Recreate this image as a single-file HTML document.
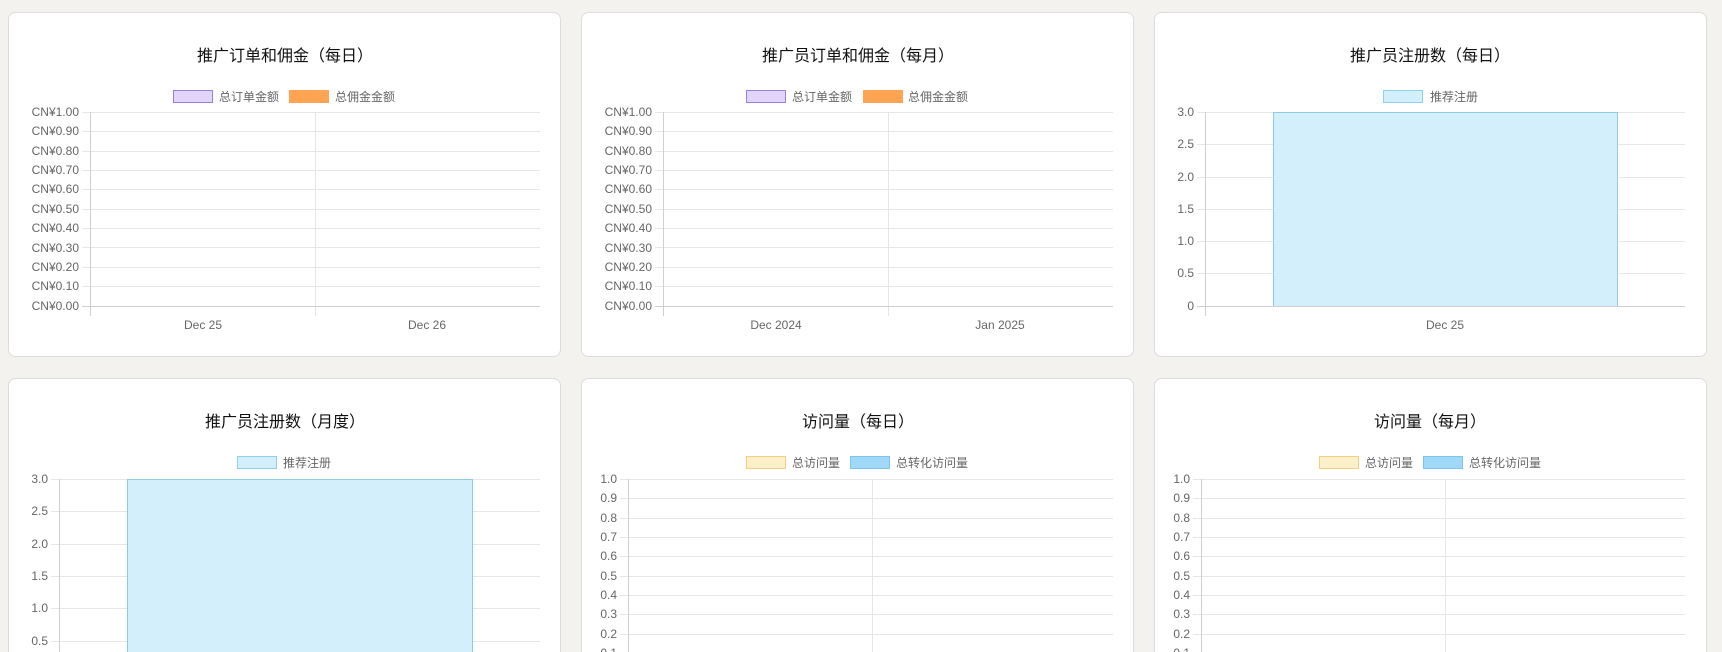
<!DOCTYPE html>
<html><head><meta charset="utf-8"><style>
html,body{margin:0;padding:0;background:#f3f2ee;width:1722px;height:652px;overflow:hidden}
svg{display:block}
text{font-family:"Liberation Sans","Noto Sans CJK SC",sans-serif}
.t{font-size:16px;fill:#111;text-anchor:middle}
.l{font-size:12px;fill:#666}
.y{font-size:12px;fill:#666;text-anchor:end}
.x{font-size:12px;fill:#666;text-anchor:middle}
.g{stroke:#e6e6e6;stroke-width:1}
.a{stroke:#cfcfcf;stroke-width:1}
.card{fill:#fff;stroke:#dcdcdc;stroke-width:1}
</style></head><body>
<svg width="1722" height="652" viewBox="0 0 1722 652">
<!-- cards -->
<rect class="card" x="8.5" y="12.5" width="552" height="344" rx="7"/>
<rect class="card" x="581.5" y="12.5" width="552" height="344" rx="7"/>
<rect class="card" x="1154.5" y="12.5" width="552" height="344" rx="7"/>
<rect class="card" x="8.5" y="378.5" width="552" height="344" rx="7"/>
<rect class="card" x="581.5" y="378.5" width="552" height="344" rx="7"/>
<rect class="card" x="1154.5" y="378.5" width="552" height="344" rx="7"/>

<!-- ===== Card 1 ===== -->
<text class="t" x="285" y="61">推广订单和佣金（每日）</text>
<rect x="173.5" y="90.5" width="39" height="12" fill="#e1d5fb" stroke="#9b7ee0"/>
<text class="l" x="219" y="101">总订单金额</text>
<rect x="289" y="90" width="40" height="13" fill="#ffa452"/>
<text class="l" x="335" y="101">总佣金金额</text>
<g>
<line class="g" x1="82" x2="540" y1="112.5" y2="112.5"/><line class="g" x1="82" x2="540" y1="131.5" y2="131.5"/><line class="g" x1="82" x2="540" y1="151.5" y2="151.5"/><line class="g" x1="82" x2="540" y1="170.5" y2="170.5"/><line class="g" x1="82" x2="540" y1="189.5" y2="189.5"/><line class="g" x1="82" x2="540" y1="209.5" y2="209.5"/><line class="g" x1="82" x2="540" y1="228.5" y2="228.5"/><line class="g" x1="82" x2="540" y1="247.5" y2="247.5"/><line class="g" x1="82" x2="540" y1="267.5" y2="267.5"/><line class="g" x1="82" x2="540" y1="286.5" y2="286.5"/>
<line class="g" x1="315.5" x2="315.5" y1="112" y2="316"/>
<line class="a" x1="82" x2="540" y1="306.5" y2="306.5"/>
<line class="a" x1="90.5" x2="90.5" y1="112" y2="316"/>
<text class="y" x="79" y="116">CN¥1.00</text><text class="y" x="79" y="135">CN¥0.90</text><text class="y" x="79" y="155">CN¥0.80</text><text class="y" x="79" y="174">CN¥0.70</text><text class="y" x="79" y="193">CN¥0.60</text><text class="y" x="79" y="213">CN¥0.50</text><text class="y" x="79" y="232">CN¥0.40</text><text class="y" x="79" y="252">CN¥0.30</text><text class="y" x="79" y="271">CN¥0.20</text><text class="y" x="79" y="290">CN¥0.10</text><text class="y" x="79" y="310">CN¥0.00</text>
<text class="x" x="203" y="329">Dec 25</text><text class="x" x="427" y="329">Dec 26</text>
</g>

<!-- ===== Card 2 ===== -->
<text class="t" x="858" y="61">推广员订单和佣金（每月）</text>
<rect x="746.5" y="90.5" width="39" height="12" fill="#e1d5fb" stroke="#9b7ee0"/>
<text class="l" x="792" y="101">总订单金额</text>
<rect x="863" y="90" width="40" height="13" fill="#ffa452"/>
<text class="l" x="908" y="101">总佣金金额</text>
<g>
<line class="g" x1="655" x2="1113" y1="112.5" y2="112.5"/><line class="g" x1="655" x2="1113" y1="131.5" y2="131.5"/><line class="g" x1="655" x2="1113" y1="151.5" y2="151.5"/><line class="g" x1="655" x2="1113" y1="170.5" y2="170.5"/><line class="g" x1="655" x2="1113" y1="189.5" y2="189.5"/><line class="g" x1="655" x2="1113" y1="209.5" y2="209.5"/><line class="g" x1="655" x2="1113" y1="228.5" y2="228.5"/><line class="g" x1="655" x2="1113" y1="247.5" y2="247.5"/><line class="g" x1="655" x2="1113" y1="267.5" y2="267.5"/><line class="g" x1="655" x2="1113" y1="286.5" y2="286.5"/>
<line class="g" x1="888.5" x2="888.5" y1="112" y2="316"/>
<line class="a" x1="655" x2="1113" y1="306.5" y2="306.5"/>
<line class="a" x1="663.5" x2="663.5" y1="112" y2="316"/>
<text class="y" x="652" y="116">CN¥1.00</text><text class="y" x="652" y="135">CN¥0.90</text><text class="y" x="652" y="155">CN¥0.80</text><text class="y" x="652" y="174">CN¥0.70</text><text class="y" x="652" y="193">CN¥0.60</text><text class="y" x="652" y="213">CN¥0.50</text><text class="y" x="652" y="232">CN¥0.40</text><text class="y" x="652" y="252">CN¥0.30</text><text class="y" x="652" y="271">CN¥0.20</text><text class="y" x="652" y="290">CN¥0.10</text><text class="y" x="652" y="310">CN¥0.00</text>
<text class="x" x="776" y="329">Dec 2024</text><text class="x" x="1000" y="329">Jan 2025</text>
</g>

<!-- ===== Card 3 ===== -->
<text class="t" x="1430" y="61">推广员注册数（每日）</text>
<rect x="1383.5" y="90.5" width="39" height="12" fill="#d3eefc" stroke="#8fd0ec"/>
<text class="l" x="1430" y="101">推荐注册</text>
<g>
<line class="g" x1="1197" x2="1685" y1="112.5" y2="112.5"/><line class="g" x1="1197" x2="1685" y1="144.5" y2="144.5"/><line class="g" x1="1197" x2="1685" y1="177.5" y2="177.5"/><line class="g" x1="1197" x2="1685" y1="209.5" y2="209.5"/><line class="g" x1="1197" x2="1685" y1="241.5" y2="241.5"/><line class="g" x1="1197" x2="1685" y1="273.5" y2="273.5"/>
<rect x="1273.5" y="112.5" width="344" height="194" fill="#d2eefc" fill-opacity="0.95" stroke="#8fcbe3"/>
<line class="a" x1="1197" x2="1685" y1="306.5" y2="306.5"/>
<line class="a" x1="1205.5" x2="1205.5" y1="112" y2="316"/>
<text class="y" x="1194" y="116">3.0</text><text class="y" x="1194" y="148">2.5</text><text class="y" x="1194" y="181">2.0</text><text class="y" x="1194" y="213">1.5</text><text class="y" x="1194" y="245">1.0</text><text class="y" x="1194" y="277">0.5</text><text class="y" x="1194" y="310">0</text>
<text class="x" x="1445" y="329">Dec 25</text>
</g>

<!-- ===== Card 4 ===== -->
<text class="t" x="285" y="427">推广员注册数（月度）</text>
<rect x="237.5" y="456.5" width="39" height="12" fill="#d3eefc" stroke="#8fd0ec"/>
<text class="l" x="283" y="467">推荐注册</text>
<g>
<line class="g" x1="51" x2="540" y1="479.5" y2="479.5"/><line class="g" x1="51" x2="540" y1="511.5" y2="511.5"/><line class="g" x1="51" x2="540" y1="544.5" y2="544.5"/><line class="g" x1="51" x2="540" y1="576.5" y2="576.5"/><line class="g" x1="51" x2="540" y1="608.5" y2="608.5"/><line class="g" x1="51" x2="540" y1="641.5" y2="641.5"/>
<rect x="127.5" y="479.5" width="345" height="200" fill="#d2eefc" fill-opacity="0.95" stroke="#8fcbe3"/>
<line class="a" x1="59.5" x2="59.5" y1="479" y2="652"/>
<text class="y" x="48" y="483">3.0</text><text class="y" x="48" y="515">2.5</text><text class="y" x="48" y="548">2.0</text><text class="y" x="48" y="580">1.5</text><text class="y" x="48" y="612">1.0</text><text class="y" x="48" y="645">0.5</text>
</g>

<!-- ===== Card 5 ===== -->
<text class="t" x="858" y="427">访问量（每日）</text>
<rect x="746.5" y="456.5" width="39" height="12" fill="#fdefca" stroke="#f3d07e"/>
<text class="l" x="792" y="467">总访问量</text>
<rect x="850.5" y="456.5" width="39" height="12" fill="#a0d9f8" stroke="#7cc4ec"/>
<text class="l" x="896" y="467">总转化访问量</text>
<g>
<line class="g" x1="620" x2="1113" y1="479.5" y2="479.5"/><line class="g" x1="620" x2="1113" y1="498.5" y2="498.5"/><line class="g" x1="620" x2="1113" y1="518.5" y2="518.5"/><line class="g" x1="620" x2="1113" y1="537.5" y2="537.5"/><line class="g" x1="620" x2="1113" y1="556.5" y2="556.5"/><line class="g" x1="620" x2="1113" y1="576.5" y2="576.5"/><line class="g" x1="620" x2="1113" y1="595.5" y2="595.5"/><line class="g" x1="620" x2="1113" y1="614.5" y2="614.5"/><line class="g" x1="620" x2="1113" y1="634.5" y2="634.5"/><line class="g" x1="620" x2="1113" y1="653.5" y2="653.5"/>
<line class="g" x1="872.5" x2="872.5" y1="479" y2="652"/>
<line class="a" x1="628.5" x2="628.5" y1="479" y2="652"/>
<text class="y" x="617" y="483">1.0</text><text class="y" x="617" y="502">0.9</text><text class="y" x="617" y="522">0.8</text><text class="y" x="617" y="541">0.7</text><text class="y" x="617" y="560">0.6</text><text class="y" x="617" y="580">0.5</text><text class="y" x="617" y="599">0.4</text><text class="y" x="617" y="618">0.3</text><text class="y" x="617" y="638">0.2</text><text class="y" x="617" y="657">0.1</text>
</g>

<!-- ===== Card 6 ===== -->
<text class="t" x="1430" y="427">访问量（每月）</text>
<rect x="1319.5" y="456.5" width="39" height="12" fill="#fdefca" stroke="#f3d07e"/>
<text class="l" x="1365" y="467">总访问量</text>
<rect x="1423.5" y="456.5" width="39" height="12" fill="#a0d9f8" stroke="#7cc4ec"/>
<text class="l" x="1469" y="467">总转化访问量</text>
<g>
<line class="g" x1="1193" x2="1685" y1="479.5" y2="479.5"/><line class="g" x1="1193" x2="1685" y1="498.5" y2="498.5"/><line class="g" x1="1193" x2="1685" y1="518.5" y2="518.5"/><line class="g" x1="1193" x2="1685" y1="537.5" y2="537.5"/><line class="g" x1="1193" x2="1685" y1="556.5" y2="556.5"/><line class="g" x1="1193" x2="1685" y1="576.5" y2="576.5"/><line class="g" x1="1193" x2="1685" y1="595.5" y2="595.5"/><line class="g" x1="1193" x2="1685" y1="614.5" y2="614.5"/><line class="g" x1="1193" x2="1685" y1="634.5" y2="634.5"/><line class="g" x1="1193" x2="1685" y1="653.5" y2="653.5"/>
<line class="g" x1="1445.5" x2="1445.5" y1="479" y2="652"/>
<line class="a" x1="1201.5" x2="1201.5" y1="479" y2="652"/>
<text class="y" x="1190" y="483">1.0</text><text class="y" x="1190" y="502">0.9</text><text class="y" x="1190" y="522">0.8</text><text class="y" x="1190" y="541">0.7</text><text class="y" x="1190" y="560">0.6</text><text class="y" x="1190" y="580">0.5</text><text class="y" x="1190" y="599">0.4</text><text class="y" x="1190" y="618">0.3</text><text class="y" x="1190" y="638">0.2</text><text class="y" x="1190" y="657">0.1</text>
</g>
</svg>
</body></html>
